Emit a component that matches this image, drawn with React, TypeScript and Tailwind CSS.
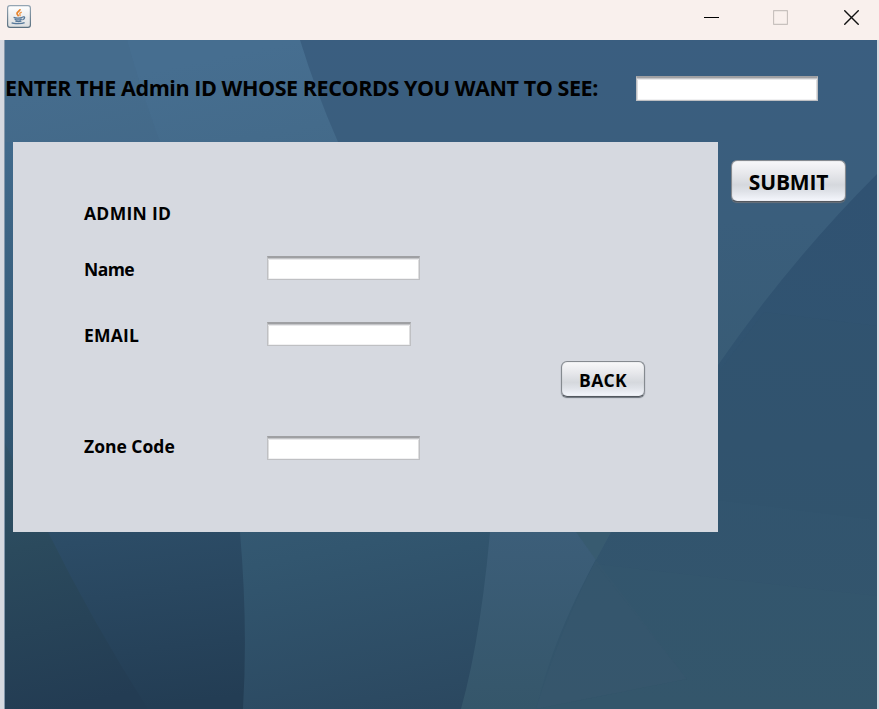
import React from "react";

function JavaIcon() {
  return (
    <svg width="24" height="23" viewBox="0 0 24 23" fill="none">
      <defs>
        <linearGradient id="tile" x1="0" y1="0" x2="0" y2="1">
          <stop offset="0" stopColor="#ffffff" />
          <stop offset="1" stopColor="#dcdedf" />
        </linearGradient>
        <linearGradient id="rim" x1="0" y1="0" x2="0" y2="1">
          <stop offset="0" stopColor="#94a5b3" />
          <stop offset="1" stopColor="#5a7080" />
        </linearGradient>
      </defs>
      <rect x="0.6" y="0.6" width="22.8" height="21.8" rx="2.4" fill="url(#tile)" stroke="url(#rim)" strokeWidth="1.2" />
      <path d="M13 4.200c.4 2-3.400 2.600-3 4.400.2 1 1.200 1.500 1.400 2.700" stroke="#e8842c" strokeWidth="1.700" />
      <path d="M14.800 7.200c-1.800.7-2.600 1.300-1.900 2.100.5.700.4 1.200-.3 1.800" stroke="#ee9a4e" strokeWidth="1.300" />
      <path d="M6.600 12.300c2 .8 6.700.8 9 0M7.600 14.300c2 .7 5.200.7 7.200 0M8.400 16.100c2 .6 4 .6 6 0M15.600 11.900c2.600-.6 2.800 1.800-.2 2.900M4.600 17.700c2 1.200 10.400 1.200 13 0" stroke="#55789a" strokeWidth="1.300" />
    </svg>
  );
}

function TitleBar() {
  return (
    <header className="flex h-10 items-start bg-[#f9f0ed]">
      <div className="pt-[5px] pl-[7px]">
        <JavaIcon />
      </div>
      <div className="ml-auto flex pt-2.5 pr-5">
        <svg className="mr-[54px]" width="15" height="15">
          <path d="M0 7.500H15" stroke="#000" />
        </svg>
        <svg className="mr-[56px]" width="15" height="15" fill="none">
          <rect x="0.500" y="0.500" width="14" height="14" rx="1" stroke="#c8c1be" strokeWidth="1.300" />
        </svg>
        <svg width="15" height="15">
          <path d="M0.300 0.300L14.700 14.700M14.700 0.300L0.300 14.700" stroke="#111" strokeWidth="1.400" />
        </svg>
      </div>
    </header>
  );
}

/* Nimbus-style wallpaper: overlapping translucent blue sheets. */
function Backdrop() {
  return (
    <svg className="[grid-area:1/1]" width="872" height="669" viewBox="5 40 872 669">
      <defs>
        <linearGradient id="base" gradientUnits="userSpaceOnUse" x1="300" y1="40" x2="440" y2="709">
          <stop offset="0" stopColor="#466e90" />
          <stop offset="0.250" stopColor="#426886" />
          <stop offset="0.740" stopColor="#32566f" />
          <stop offset="1" stopColor="#2b4860" />
        </linearGradient>
        <linearGradient id="leftSheet" gradientUnits="userSpaceOnUse" x1="60" y1="142" x2="130" y2="709">
          <stop offset="0" stopColor="#416a8c" />
          <stop offset="0.500" stopColor="#315672" />
          <stop offset="0.700" stopColor="#2c4c66" />
          <stop offset="1" stopColor="#233d54" />
        </linearGradient>
        <linearGradient id="leftWall" gradientUnits="userSpaceOnUse" x1="0" y1="440" x2="60" y2="709">
          <stop offset="0" stopColor="#31546b" />
          <stop offset="0.400" stopColor="#2b4a5d" />
          <stop offset="1" stopColor="#233c53" />
        </linearGradient>
        <linearGradient id="upper" gradientUnits="userSpaceOnUse" x1="600" y1="40" x2="600" y2="400">
          <stop offset="0" stopColor="#3a5e80" />
          <stop offset="0.500" stopColor="#3a5e7c" />
          <stop offset="1" stopColor="#385b74" />
        </linearGradient>
        <linearGradient id="strip" gradientUnits="userSpaceOnUse" x1="540" y1="532" x2="540" y2="709">
          <stop offset="0" stopColor="#3c5e79" />
          <stop offset="1" stopColor="#35566a" />
        </linearGradient>
        <linearGradient id="right" gradientUnits="userSpaceOnUse" x1="800" y1="180" x2="770" y2="709">
          <stop offset="0" stopColor="#305272" />
          <stop offset="0.500" stopColor="#31546f" />
          <stop offset="1" stopColor="#34556b" />
        </linearGradient>
      </defs>
      <rect x="5" y="40" width="872" height="669" fill="url(#base)" />
      <path d="M5 40H127Q142 93 160 142H5Z" fill="#3f6484" fillOpacity="0.200" />
      <path d="M5 142H160Q232 330 240 532Q248 625 243 709H5Z" fill="url(#leftSheet)" />
      <path d="M5 443L48 532Q92 621 148 709H5Z" fill="url(#leftWall)" />
      <path d="M300 40Q316 92 338 142L500 400L877 400V40Z" fill="url(#upper)" />
      <path d="M495 460Q487 615 461 709H877V380H495Z" fill="url(#strip)" />
      <path d="M877 174Q790 261 718 365Q650 453 611 532C575 595 551 648 536 709H877Z" fill="url(#right)" />
      <path d="M576 532H611L596 560Z" fill="#385b70" />
      <path d="M596 560L687 679L536 709Q560 630 596 560Z" fill="#3b5c70" fillOpacity="0.250" />
      <path d="M596 564L877 596V709H536L687 679Z" fill="#385970" fillOpacity="0.200" />
      <path d="M764 312L877 326V520L718 500V373Z" fill="#32546d" fillOpacity="0.300" />
    </svg>
  );
}

function Field({ className, label }: { className: string; label: string }) {
  return (
    <input
      aria-label={label}
      className={
        "block border border-t-2 border-[#bfc0c3] border-t-[#9fa0a3] bg-white shadow-[inset_0_1px_0_#c4c5c8,inset_0_2px_0_#e9e9eb,inset_1px_0_0_#dededf,inset_-1px_0_0_#dededf,inset_0_-1px_0_#f1f1f2] outline-none " +
        className
      }
    />
  );
}

const buttonLook =
  "flex items-center justify-center rounded-[6px] border-[1.500px] border-[#858a90] border-b-[#53585f] bg-[linear-gradient(#f8f8fa_0%,#e5e6ea_35%,#d5d8dd_60%,#dee1e7_75%,#f5f7fd_100%)] shadow-[0_1px_1px_#6b727a,inset_0_0_1px_#999fa6]";

const labelLook = "text-[17.500px] leading-6 whitespace-nowrap";

export default function App() {
  return (
    <div className="flex h-[709px] w-[879px] flex-col overflow-hidden bg-[#d6d9e0] font-['Open_Sans','Noto_Sans',sans-serif] font-bold text-black">
      <TitleBar />
      <div className="ml-1 grid h-[669px] w-[873px] border-l border-[#8498ac]">
        <Backdrop />
        <main className="z-10 flex flex-col [grid-area:1/1]">
          <div className="flex h-[102px] items-start pt-9">
            <h1 className="-mt-px w-[631px] text-[21.500px] leading-[25px] whitespace-nowrap">
              <span className="tracking-[-0.410px] [word-spacing:-0.1px]">ENTER THE Admin ID WHOSE RECORDS YOU WANT TO SEE:</span>
            </h1>
            <Field label="Search admin ID" className="h-[25px] w-[182px]" />
          </div>
          <div className="flex items-start pl-2">
            <section className="flex h-[390px] w-[705px] bg-[#d6d9e0] pl-[71px]">
              <div className="w-[183px] pt-[59px]">
                <div className={labelLook + " mb-8 tracking-[0.300px]"}>ADMIN ID</div>
                <div className={labelLook + " mb-[42px] tracking-[-0.550px]"}>Name</div>
                <div className={labelLook + " mb-[87px] tracking-[0.200px]"}>EMAIL</div>
                <div className={labelLook}>Zone Code</div>
              </div>
              <div className="w-[294px] pt-[114px]">
                <Field label="Name" className="mb-[42px] h-6 w-[153px]" />
                <Field label="Email" className="mb-[90px] h-6 w-36" />
                <Field label="Zone code" className="h-6 w-[153px]" />
              </div>
              <button className={buttonLook + " mt-[219px] h-[36px] w-[84px] text-[17.500px] tracking-[0.300px]"}>
                <span className="pt-0.5">BACK</span>
              </button>
            </section>
            <button className={buttonLook + " mt-[18px] ml-[13px] h-[42px] w-[115px] text-[21px] tracking-[-0.200px]"}>
              <span className="pt-1">SUBMIT</span>
            </button>
          </div>
        </main>
      </div>
    </div>
  );
}
